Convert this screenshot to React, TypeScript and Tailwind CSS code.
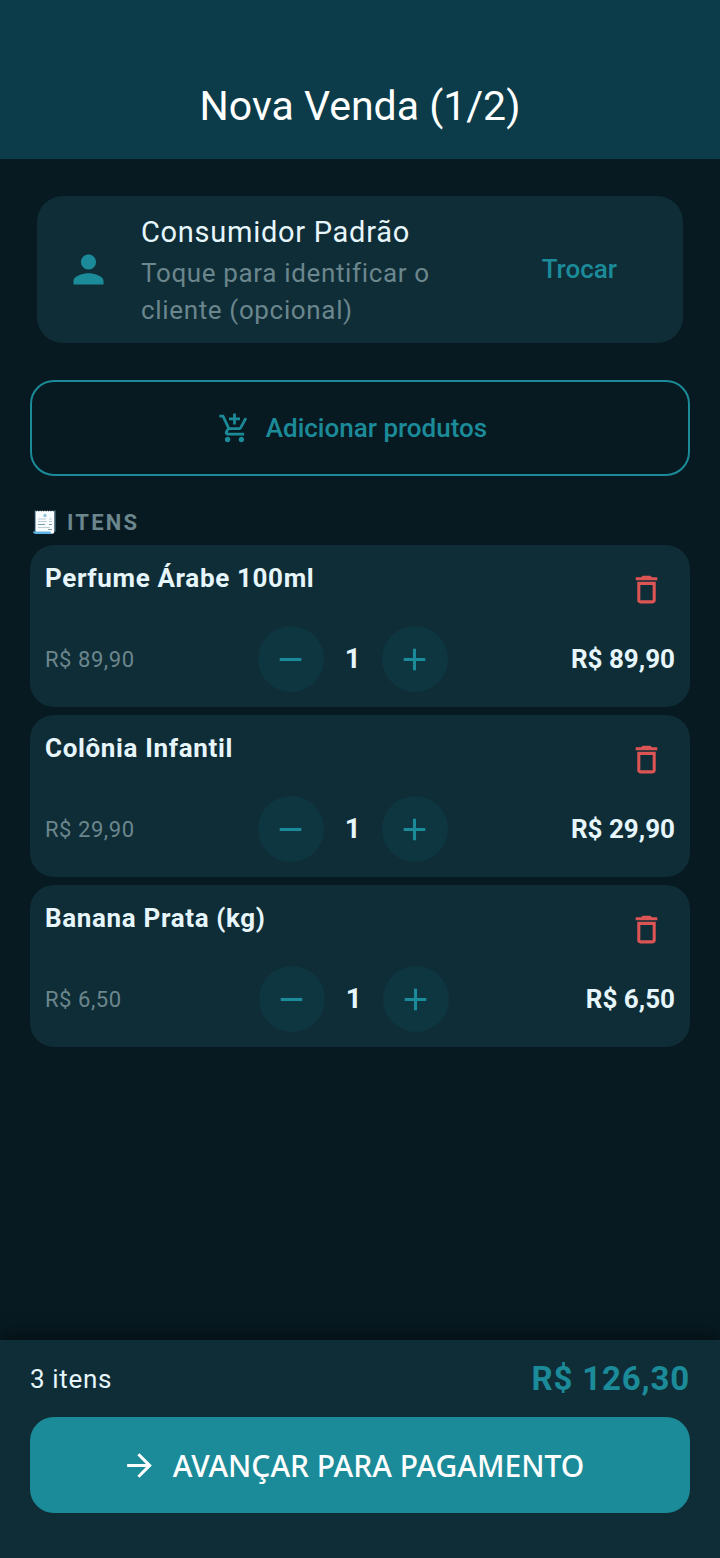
import { useState } from 'react';
import {
  MdAdd,
  MdAddShoppingCart,
  MdArrowForward,
  MdDeleteOutline,
  MdPerson,
  MdRemove,
} from 'react-icons/md';

type Item = {
  id: number;
  name: string;
  price: number;
  qty: number;
};

const initialItems: Item[] = [
  { id: 1, name: 'Perfume Árabe 100ml', price: 89.9, qty: 1 },
  { id: 2, name: 'Colônia Infantil', price: 29.9, qty: 1 },
  { id: 3, name: 'Banana Prata (kg)', price: 6.5, qty: 1 },
];

const formatPrice = (value: number) => `R$ ${value.toFixed(2).replace('.', ',')}`;

function ReceiptIcon() {
  return (
    <svg viewBox="0 0 24 26" className="w-6 h-[26px]" aria-hidden="true">
      <path
        d="M3.5 1.5l1 1 1.2-1 1.2 1 1.2-1 1.2 1 1.2-1 1.2 1 1.2-1 1.2 1 1.2-1 1.2 1 1.2-1 1.2 1 1.2-1 1.2 1 1-1v21.3c0 1.2-.8 2-1.8 2H5l-1.5-2z"
        fill="#f8fcff"
      />
      <path d="M3.3 1.5v21M23 1.5v21" stroke="#9fd0ee" strokeWidth="0.6" />
      <path d="M1 22.5h17.5c0 1.3.8 2.5 2.2 2.5H4c-1.7 0-3-1-3-2.5z" fill="#5eb3e4" />
      <circle cx="13" cy="6.5" r="1.7" fill="#8fc4dc" />
      <path
        d="M6 10h8M17 10h3M6 12.5h9M17 12.5h3M6 18.5h12"
        stroke="#b4c8d2"
        strokeWidth="0.9"
      />
      <path d="M6 15.5h7M17 15.5h3M16 20.5h4" stroke="#7d9cab" strokeWidth="1" />
    </svg>
  );
}

type ItemCardProps = {
  item: Item;
  onChange: (qty: number) => void;
  onRemove: () => void;
};

function ItemCard({ item, onChange, onRemove }: ItemCardProps) {
  return (
    <li className="bg-[#0f2d37] rounded-[24px] p-[15px]">
      <div className="flex items-start justify-between">
        <h3 className="text-[26px] leading-9 font-bold tracking-wide">{item.name}</h3>
        <button
          type="button"
          aria-label={`Remover ${item.name}`}
          onClick={onRemove}
          className="size-[58px] flex items-center justify-center text-[#dc5454]"
        >
          <MdDeleteOutline size={37} />
        </button>
      </div>
      <div className="flex items-center justify-between mt-2">
        <span className="text-[22px] tracking-wide text-[#6b868d]">{formatPrice(item.price)}</span>
        <div className="flex items-center">
          <button
            type="button"
            aria-label="Diminuir quantidade"
            onClick={() => onChange(Math.max(1, item.qty - 1))}
            className="size-[66px] rounded-full bg-[#0e3641] text-[#1c8b99] flex items-center justify-center"
          >
            <MdRemove size={37} />
          </button>
          <span className="w-[58px] text-center text-[28px] font-bold">{item.qty}</span>
          <button
            type="button"
            aria-label="Aumentar quantidade"
            onClick={() => onChange(item.qty + 1)}
            className="size-[66px] rounded-full bg-[#0e3641] text-[#1c8b99] flex items-center justify-center"
          >
            <MdAdd size={37} />
          </button>
        </div>
        <span className="text-[26px] font-bold">{formatPrice(item.price * item.qty)}</span>
      </div>
    </li>
  );
}

export default function App() {
  const [items, setItems] = useState(initialItems);

  const total = items.reduce((sum, item) => sum + item.price * item.qty, 0);

  const changeQty = (id: number, qty: number) =>
    setItems(items.map((item) => (item.id === id ? { ...item, qty } : item)));

  const removeItem = (id: number) => setItems(items.filter((item) => item.id !== id));

  return (
    <div className="min-h-screen flex flex-col bg-[#071a21] text-[#e6f6fb] font-[Roboto,sans-serif]">
      <header className="bg-[#0c3c49] pt-[54px]">
        <h1 className="text-[41px] leading-[105px] text-center text-white">Nova Venda (1/2)</h1>
      </header>

      <main className="flex-1 px-[30px] pt-[37px] pb-8">
        <section className="mx-[7px] bg-[#0f2d37] rounded-[26px] px-[29px] py-[14px] flex items-center gap-[30px]">
          <MdPerson size={45} className="text-[#1c8b99] shrink-0" />
          <div className="flex-1">
            <h2 className="text-[29px] leading-[45px] tracking-wide">Consumidor Padrão</h2>
            <p className="text-[26px] leading-[37px] tracking-wide text-[#6b868d]">
              Toque para identificar o cliente (opcional)
            </p>
          </div>
          <button type="button" className="px-[37px] py-4 text-[26px] font-medium text-[#1c8b99]">
            Trocar
          </button>
        </section>

        <button
          type="button"
          className="mt-[37px] w-full h-24 pr-[15px] border-2 border-[#1c8b99] rounded-[24px] flex items-center justify-center gap-[15px] text-[26px] font-medium text-[#1c8b99]"
        >
          <MdAddShoppingCart size={33} />
          Adicionar produtos
        </button>

        <div className="mt-[30px] mb-[7px] ml-[2px] h-8 flex items-center gap-[11px]">
          <ReceiptIcon />
          <h2 className="text-[22px] font-bold tracking-widest text-[#6b868d]">ITENS</h2>
        </div>

        <ul className="flex flex-col gap-2">
          {items.map((item) => (
            <ItemCard
              key={item.id}
              item={item}
              onChange={(qty) => changeQty(item.id, qty)}
              onRemove={() => removeItem(item.id)}
            />
          ))}
        </ul>
      </main>

      <footer className="bg-[#0f2d37] px-[30px] pt-[15px] pb-[45px] shadow-[0_-4px_16px_rgba(0,0,0,0.5)]">
        <div className="h-12 flex items-center justify-between">
          <span className="text-[26px] tracking-wide">{items.length} itens</span>
          <strong className="text-[33px] font-bold tracking-wide text-[#1c8b99]">
            {formatPrice(total)}
          </strong>
        </div>
        <button
          type="button"
          className="mt-[14px] w-full h-24 pr-[15px] bg-[#1c8b99] rounded-[24px] flex items-center justify-center gap-[15px] text-[30px] font-medium text-white font-['Noto_Sans',sans-serif]"
        >
          <MdArrowForward size={37} />
          AVANÇAR PARA PAGAMENTO
        </button>
      </footer>
    </div>
  );
}
